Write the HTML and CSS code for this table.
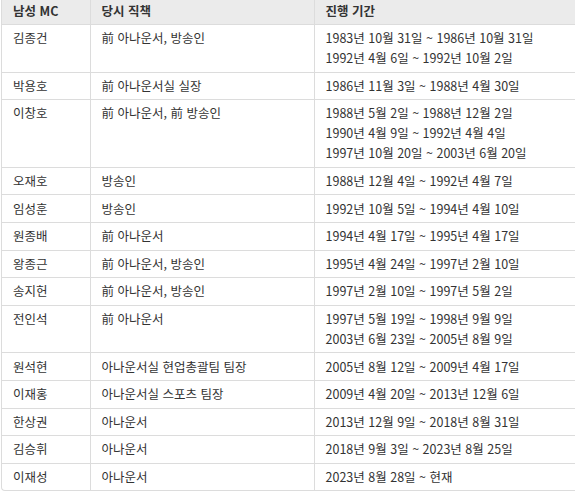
FILE: index.html
```html
<!DOCTYPE html>
<html lang="ko">
<head>
<meta charset="utf-8">
<link rel="stylesheet" href="styles.css">
</head>
<body>
<div class="wrap">
<table class="mc">
<thead>
<tr><th class="c1">남성 MC</th><th class="c2">당시 직책</th><th class="c3">진행 기간</th></tr>
</thead>
<tbody>
<tr><td>김종건</td><td>前 아나운서, 방송인</td><td>1983년 10월 31일 ~ 1986년 10월 31일<br>1992년 4월 6일 ~ 1992년 10월 2일</td></tr>
<tr><td>박용호</td><td>前 아나운서실 실장</td><td>1986년 11월 3일 ~ 1988년 4월 30일</td></tr>
<tr><td>이창호</td><td>前 아나운서, 前 방송인</td><td>1988년 5월 2일 ~ 1988년 12월 2일<br>1990년 4월 9일 ~ 1992년 4월 4일<br>1997년 10월 20일 ~ 2003년 6월 20일</td></tr>
<tr><td>오재호</td><td>방송인</td><td>1988년 12월 4일 ~ 1992년 4월 7일</td></tr>
<tr><td>임성훈</td><td>방송인</td><td>1992년 10월 5일 ~ 1994년 4월 10일</td></tr>
<tr><td>원종배</td><td>前 아나운서</td><td>1994년 4월 17일 ~ 1995년 4월 17일</td></tr>
<tr><td>왕종근</td><td>前 아나운서, 방송인</td><td>1995년 4월 24일 ~ 1997년 2월 10일</td></tr>
<tr><td>송지헌</td><td>前 아나운서, 방송인</td><td>1997년 2월 10일 ~ 1997년 5월 2일</td></tr>
<tr><td>전인석</td><td>前 아나운서</td><td>1997년 5월 19일 ~ 1998년 9월 9일<br>2003년 6월 23일 ~ 2005년 8월 9일</td></tr>
<tr><td>원석현</td><td>아나운서실 현업총괄팀 팀장</td><td>2005년 8월 12일 ~ 2009년 4월 17일</td></tr>
<tr><td>이재홍</td><td>아나운서실 스포츠 팀장</td><td>2009년 4월 20일 ~ 2013년 12월 6일</td></tr>
<tr><td>한상권</td><td>아나운서</td><td>2013년 12월 9일 ~ 2018년 8월 31일</td></tr>
<tr><td>김승휘</td><td>아나운서</td><td>2018년 9월 3일 ~ 2023년 8월 25일</td></tr>
<tr><td>이재성</td><td>아나운서</td><td>2023년 8월 28일 ~ 현재</td></tr>
</tbody>
</table>
</div>
</body>
</html>
```
FILE: styles.css
```css
html, body {
  margin: 0;
  padding: 0;
  background: #fff;
  overflow: hidden;
}
body {
  font-family: "Noto Sans CJK KR", "Noto Sans", sans-serif;
  font-size: 12.5px;
  color: #333;
}
.wrap {
  width: 574px;
  box-sizing: border-box;
  margin-left: 1px;
  border-left: 1px solid #dcdcdc;
  border-bottom: 1px solid #dcdcdc;
  border-radius: 0 0 0 4px;
  overflow: hidden;
}
.mc {
  width: 100%;
  border-collapse: collapse;
  table-layout: fixed;
}
.mc th, .mc td {
  text-align: left;
  vertical-align: top;
  padding: 3.3px 11px;
  line-height: 20px;
  border-bottom: 1px solid #dcdcdc;
  border-left: 1px solid #dcdcdc;
  white-space: nowrap;
}
.mc th:first-child, .mc td:first-child {
  border-left: none;
}
.mc tbody tr:last-child td {
  border-bottom: none;
}
.mc th {
  background: #ebebeb;
  font-weight: bold;
  padding-top: 1px;
  padding-bottom: 3px;
}
.c1 { width: 88px; box-sizing: border-box; }
.c2 { width: 224px; box-sizing: border-box; }
```
